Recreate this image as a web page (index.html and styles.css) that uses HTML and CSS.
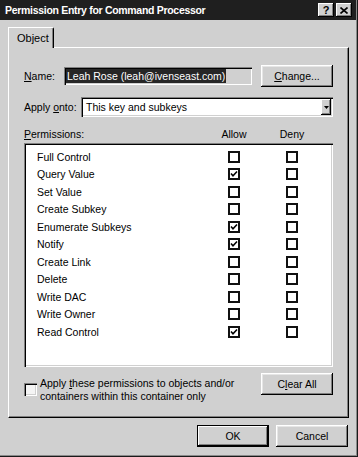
FILE: index.html
```html
<!DOCTYPE html>
<html lang="en">
<head>
    <meta charset="UTF-8">
    <title>Permission Entry for Command Processor</title>
    <link rel="stylesheet" href="styles.css">
</head>
<body>
    <div class="window">
        <div class="titlebar">
            <span class="title">Permission Entry for Command Processor</span>
            <div class="title-btns">
                <span class="tbtn">?</span>
                <span class="tbtn">
                    <svg width="8" height="7" viewBox="0 0 8 7"><path d="M0.5 0.5 L7.5 6.5 M7.5 0.5 L0.5 6.5" stroke="#000" stroke-width="1.6"/></svg>
                </span>
            </div>
        </div>

        <div class="content">
            <div class="tabs">
                <div class="tab">Object</div>
            </div>

            <div class="panel">
                <div class="name-row">
                    <span class="lbl lbl-name"><u>N</u>ame:</span>
                    <div class="field"><span class="sel">Leah Rose (leah@ivenseast.com)</span></div>
                    <button class="btn change-btn"><u>C</u>hange...</button>
                </div>

                <div class="apply-row">
                    <span class="lbl lbl-apply">Apply <u>o</u>nto:</span>
                    <div class="combo">
                        <span class="combo-text">This key and subkeys</span>
                        <span class="combo-btn">
                            <svg width="5" height="3" viewBox="0 0 5 3"><path d="M0 0 H5 L2.5 3 Z" fill="#000"/></svg>
                        </span>
                    </div>
                </div>

                <div class="perm-head">
                    <span><u>P</u>ermissions:</span>
                    <span class="col">Allow</span>
                    <span class="col">Deny</span>
                </div>

                <div class="perm-list">
                    <div class="perm-row"><span class="perm-name">Full Control</span><span class="col"><i class="cb"></i></span><span class="col"><i class="cb"></i></span></div>
                    <div class="perm-row"><span class="perm-name">Query Value</span><span class="col"><i class="cb on"></i></span><span class="col"><i class="cb"></i></span></div>
                    <div class="perm-row"><span class="perm-name">Set Value</span><span class="col"><i class="cb"></i></span><span class="col"><i class="cb"></i></span></div>
                    <div class="perm-row"><span class="perm-name">Create Subkey</span><span class="col"><i class="cb"></i></span><span class="col"><i class="cb"></i></span></div>
                    <div class="perm-row"><span class="perm-name">Enumerate Subkeys</span><span class="col"><i class="cb on"></i></span><span class="col"><i class="cb"></i></span></div>
                    <div class="perm-row"><span class="perm-name">Notify</span><span class="col"><i class="cb on"></i></span><span class="col"><i class="cb"></i></span></div>
                    <div class="perm-row"><span class="perm-name">Create Link</span><span class="col"><i class="cb"></i></span><span class="col"><i class="cb"></i></span></div>
                    <div class="perm-row"><span class="perm-name">Delete</span><span class="col"><i class="cb"></i></span><span class="col"><i class="cb"></i></span></div>
                    <div class="perm-row"><span class="perm-name">Write DAC</span><span class="col"><i class="cb"></i></span><span class="col"><i class="cb"></i></span></div>
                    <div class="perm-row"><span class="perm-name">Write Owner</span><span class="col"><i class="cb"></i></span><span class="col"><i class="cb"></i></span></div>
                    <div class="perm-row"><span class="perm-name">Read Control</span><span class="col"><i class="cb on"></i></span><span class="col"><i class="cb"></i></span></div>
                </div>

                <div class="bottom-row">
                    <i class="check3d"></i>
                    <span class="apply-text">Apply <u>t</u>hese permissions to objects and/or<br>containers within this container only</span>
                    <button class="btn clear-btn">C<u>l</u>ear All</button>
                </div>
            </div>

            <div class="footer">
                <button class="btn btn-default">OK</button>
                <button class="btn">Cancel</button>
            </div>
        </div>
    </div>
</body>
</html>
```

FILE: styles.css
```css
* {
    margin: 0;
    padding: 0;
    box-sizing: border-box;
}

body {
    background: #d0d0d0;
    font-family: "Liberation Sans", Arial, sans-serif;
    font-size: 10.5px;
    color: #000;
}

u {
    text-decoration: underline;
    text-underline-offset: 1px;
}

.window {
    width: 358px;
    height: 457px;
    background: #d0d0d0;
    box-shadow: inset -1px -1px #1a1a1a, inset -2px -2px #8a8a8a;
    display: flex;
    flex-direction: column;
}

.titlebar {
    height: 20px;
    margin-right: 2px;
    background: #1f1f1f;
    color: #fff;
    display: flex;
    align-items: center;
    justify-content: space-between;
    padding: 0 4px 0 5px;
}

.title {
    font-weight: bold;
    font-size: 10.5px;
    letter-spacing: -0.3px;
}

.title-btns {
    display: flex;
    gap: 2px;
}

.tbtn {
    width: 16px;
    height: 14px;
    background: #d0d0d0;
    color: #000;
    font-weight: bold;
    font-size: 11px;
    display: flex;
    align-items: center;
    justify-content: center;
    box-shadow: inset -1px -1px #000, inset 1px 1px #fff, inset -2px -2px #808080;
}

.content {
    padding: 7px 9px 0 8px;
    display: flex;
    flex-direction: column;
}

.tabs {
    display: flex;
    height: 20px;
}

.tab {
    position: relative;
    z-index: 1;
    width: 46px;
    height: 21px;
    background: #d0d0d0;
    border-top: 1px solid #fff;
    border-left: 1px solid #fff;
    border-right: 1px solid #000;
    border-top-right-radius: 2px;
    box-shadow: inset -1px 0 #808080;
    padding: 4px 0 0 8px;
    font-size: 11px;
}

.panel {
    height: 371px;
    border-style: solid;
    border-width: 1px;
    border-color: #fff #000 #000 #fff;
    box-shadow: inset -1px -1px #808080;
    padding: 17px 15px 0 15px;
    display: flex;
    flex-direction: column;
}

.btn {
    width: 72px;
    height: 22px;
    border: none;
    background: #d0d0d0;
    font: inherit;
    color: #000;
    box-shadow: inset -1px -1px #000, inset 1px 1px #fff, inset -2px -2px #808080, inset 2px 2px #e6e6e6;
}

.btn-default {
    box-shadow: inset 0 0 0 1px #000, inset -2px -2px #000, inset 2px 2px #fff, inset -3px -3px #808080;
}

.name-row {
    display: flex;
    align-items: center;
    height: 22px;
}

.lbl-name {
    width: 40px;
}

.field {
    width: 188px;
    height: 18px;
    padding: 2px 2px;
    display: flex;
    align-items: center;
    box-shadow: inset 1px 1px #808080, inset 2px 2px #000, inset -1px -1px #fff, inset -2px -2px #d0d0d0;
}

.sel {
    background: #262626;
    color: #fff;
    padding: 0 1px;
    line-height: 14px;
}

.change-btn {
    margin-left: auto;
}

.apply-row {
    display: flex;
    align-items: center;
    margin-top: 10px;
    height: 20px;
}

.lbl-apply {
    width: 57px;
}

.combo {
    flex: 1;
    height: 20px;
    background: #fff;
    display: flex;
    align-items: center;
    padding: 0 2px 0 5px;
    box-shadow: inset 1px 1px #808080, inset 2px 2px #000, inset -1px -1px #fff, inset -2px -2px #d0d0d0;
}

.combo-text {
    flex: 1;
}

.combo-btn {
    width: 10px;
    height: 16px;
    background: #d0d0d0;
    display: flex;
    align-items: center;
    justify-content: center;
    box-shadow: inset -1px -1px #000, inset 1px 1px #fff, inset -2px -2px #808080;
}

.perm-head {
    display: grid;
    grid-template-columns: 172px 40px 40px;
    column-gap: 18px;
    margin-top: 11px;
    line-height: 13px;
}

.col {
    display: flex;
    justify-content: center;
}

.perm-list {
    margin-top: 2px;
    height: 224px;
    background: #fff;
    padding: 5px 2px 0 2px;
    box-shadow: inset 1px 1px #808080, inset 2px 2px #000, inset -1px -1px #fff, inset -2px -2px #d0d0d0;
}

.perm-row {
    display: grid;
    grid-template-columns: 170px 40px 40px;
    column-gap: 18px;
    align-items: center;
    height: 17.5px;
}

.perm-name {
    padding-left: 11px;
}

.cb {
    display: block;
    width: 12px;
    height: 12px;
    border: 2px solid #111;
    background: #fff;
}

.cb.on {
    background: #fff url("data:image/svg+xml,%3Csvg xmlns='http://www.w3.org/2000/svg' width='8' height='8' viewBox='0 0 8 8'%3E%3Cpath d='M1 3.5 L3 5.8 L7 1.5' stroke='%23000' stroke-width='1.6' fill='none'/%3E%3C/svg%3E") center / 8px 8px no-repeat;
}

.bottom-row {
    display: flex;
    align-items: flex-start;
    margin-top: 6px;
}

.check3d {
    display: block;
    width: 13px;
    height: 13px;
    margin-top: 10px;
    background: #f4f4f4;
    box-shadow: inset 1px 1px #808080, inset 2px 2px #000, inset -1px -1px #fff, inset -2px -2px #d0d0d0;
}

.apply-text {
    margin: 4px 0 0 3px;
    line-height: 13px;
}

.clear-btn {
    margin-left: auto;
}

.footer {
    display: flex;
    justify-content: flex-end;
    gap: 7px;
    margin-top: 7px;
    padding-right: 1px;
}
```
